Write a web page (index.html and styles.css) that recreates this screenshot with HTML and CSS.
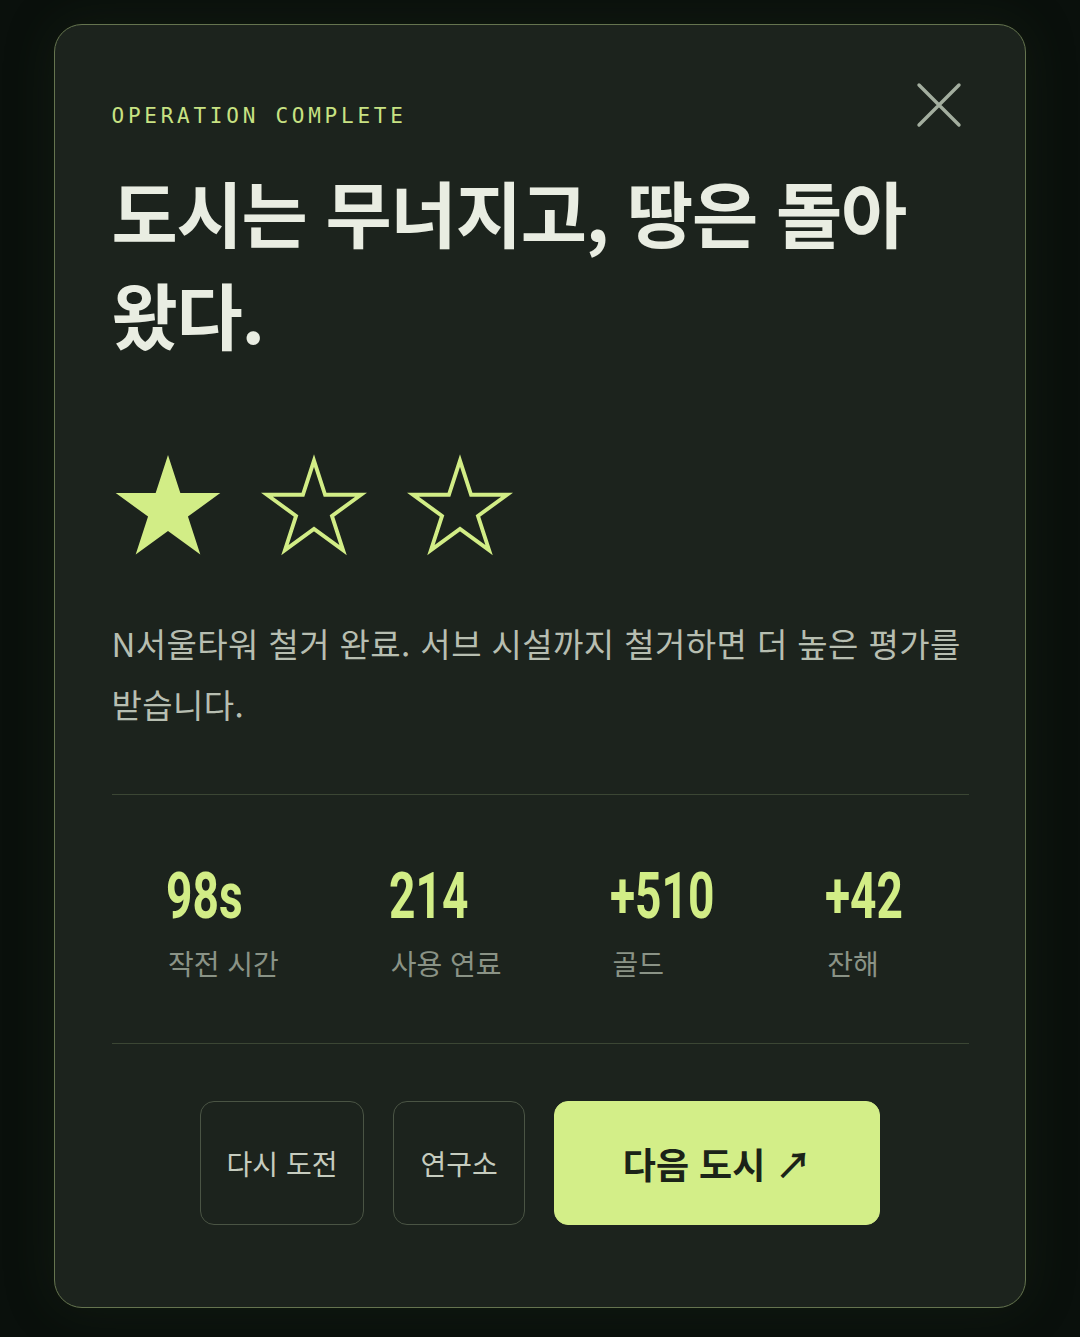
FILE: index.html
```html
<!DOCTYPE html>
<html lang="ko">
<head>
<meta charset="utf-8">
<title>Operation Complete</title>
<link rel="stylesheet" href="styles.css">
</head>
<body>
<main class="card">
  <button class="close" aria-label="닫기">
    <svg width="48" height="48" viewBox="0 0 48 48"><path d="M4 4 L44 44 M44 4 L4 44" stroke="#a3ae9f" stroke-width="3.4" stroke-linecap="round" fill="none"/></svg>
  </button>
  <p class="eyebrow">OPERATION COMPLETE</p>
  <h1 class="title">도시는 무너지고, 땅은 돌아 왔다.</h1>
  <div class="stars">
    <svg class="star" width="112" height="106" viewBox="0 0 110 104"><polygon points="55,2 67.11,39.33 106.36,39.31 74.59,62.37 86.74,99.69 55,76.6 23.26,99.69 35.41,62.37 3.64,39.31 42.89,39.33" fill="#d2ed86"/></svg>
    <svg class="star" width="112" height="106" viewBox="0 0 110 104"><polygon transform="translate(55 56) scale(0.9) translate(-55 -56)" points="55,2 67.11,39.33 106.36,39.31 74.59,62.37 86.74,99.69 55,76.6 23.26,99.69 35.41,62.37 3.64,39.31 42.89,39.33" fill="none" stroke="#d2ed86" stroke-width="4.2"/></svg>
    <svg class="star" width="112" height="106" viewBox="0 0 110 104"><polygon transform="translate(55 56) scale(0.9) translate(-55 -56)" points="55,2 67.11,39.33 106.36,39.31 74.59,62.37 86.74,99.69 55,76.6 23.26,99.69 35.41,62.37 3.64,39.31 42.89,39.33" fill="none" stroke="#d2ed86" stroke-width="4.2"/></svg>
  </div>
  <p class="desc">N서울타워 철거 완료. 서브 시설까지 철거하면 더 높은 평가를 받습니다.</p>
  <section class="stats">
    <div class="stat"><span class="num">98s</span><span class="label">작전 시간</span></div>
    <div class="stat"><span class="num">214</span><span class="label">사용 연료</span></div>
    <div class="stat"><span class="num">+510</span><span class="label">골드</span></div>
    <div class="stat"><span class="num">+42</span><span class="label">잔해</span></div>
  </section>
  <div class="actions">
    <button class="btn btn-outline">다시 도전</button>
    <button class="btn btn-outline">연구소</button>
    <button class="btn btn-primary">다음 도시 ↗</button>
  </div>
</main>
</body>
</html>
```
FILE: styles.css
```css
* { box-sizing: border-box; }
html, body { margin: 0; }
body {
  background: #0a100c;
  padding: 24px 54px 31px;
  font-family: "Noto Sans CJK KR", "Noto Sans", sans-serif;
}
.card {
  position: relative;
  width: 972px;
  background: #1c231d;
  border: 1.5px solid #65744f;
  border-radius: 28px;
  padding: 79px 56.5px 82px;
  box-shadow: 0 0 50px rgba(40, 60, 30, 0.25);
}
.close {
  position: absolute;
  top: 55.5px;
  right: 62.5px;
  width: 48px;
  height: 48px;
  padding: 0;
  border: 0;
  background: transparent;
}
.close svg { display: block; }
.eyebrow {
  margin: 0;
  font-family: "DejaVu Sans Mono", "Liberation Mono", monospace;
  font-size: 21px;
  line-height: 24px;
  letter-spacing: 3.75px;
  color: #c8e283;
}
.title {
  margin: 32px 0 0;
  font-size: 72px;
  line-height: 102px;
  font-weight: 700;
  letter-spacing: -1.2px;
  color: #e9ede2;
}
.stars {
  display: flex;
  gap: 34px;
  margin: 89px 0 0 0;
}
.star { display: block; }
.desc {
  margin: 54px 0 0;
  font-size: 33px;
  line-height: 61px;
  font-weight: 400;
  letter-spacing: 0.4px;
  color: #b7beb1;
}
.stats {
  margin-top: 59px;
  border-top: 1px solid #3b4634;
  border-bottom: 1px solid #3b4634;
  padding: 69px 0 62px;
  display: grid;
  grid-template-columns: 110px 109px 102px 85px;
  justify-content: space-around;
}
.stat { display: flex; flex-direction: column; }
.num {
  display: block;
  font-family: "Roboto", sans-serif;
  font-weight: 700;
  font-size: 64px;
  line-height: 66px;
  color: #d2ed86;
  white-space: nowrap;
  transform: scaleX(0.72);
  transform-origin: left top;
  margin-left: -2px;
}
.label {
  margin-top: 15px;
  font-size: 28px;
  line-height: 36px;
  color: #8a9386;
  white-space: nowrap;
}
.actions {
  margin-top: 57px;
  display: flex;
  justify-content: center;
  gap: 29px;
}
.btn {
  height: 124px;
  border-radius: 14px;
  font-family: "Noto Sans CJK KR", "Noto Sans", sans-serif;
  display: flex;
  align-items: center;
  justify-content: center;
}
.btn-outline {
  padding: 0 26px;
  background: transparent;
  border: 1.5px solid #4a5444;
  color: #c6ccbf;
  font-size: 28px;
}
.btn-primary {
  padding: 0 68px;
  background: #d3ee88;
  border: 1.5px solid #d3ee88;
  color: #1b2318;
  font-size: 36px;
  font-weight: 700;
  white-space: pre;
}
```
